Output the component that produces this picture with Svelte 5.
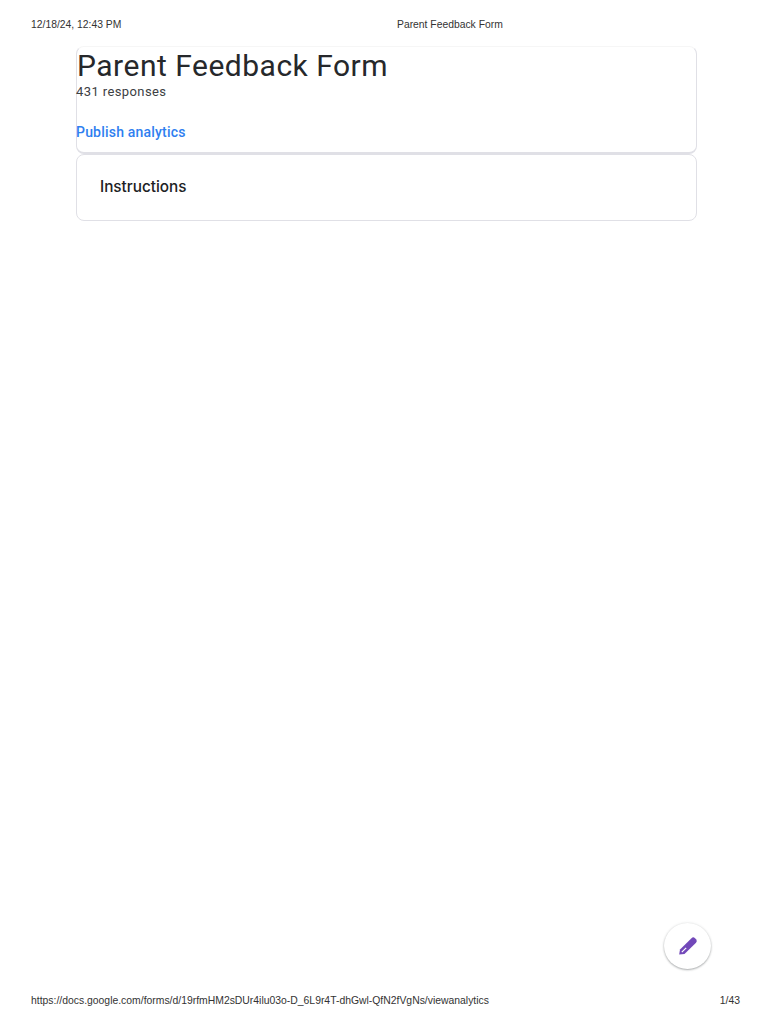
<script>
  const title = 'Parent Feedback Form';
</script>

<div class="page">
  <header class="print-head">
    <span class="date">12/18/24, 12:43 PM</span>
    <span class="doc-title">{title}</span>
  </header>

  <main class="content">
    <section class="card summary">
      <h1>{title}</h1>
      <p class="count">431 responses</p>
      <a class="publish" href="#publish">Publish analytics</a>
    </section>
    <section class="card instructions">
      <h2>Instructions</h2>
    </section>
  </main>

  <button class="fab" aria-label="Edit">
    <svg viewBox="0 0 24 24" width="24" height="24" aria-hidden="true">
      <path d="M3.2 20.5L4 15.5L15.5 4.2a2.5 2.5 0 0 1 3.5 0l1 1a2.5 2.5 0 0 1 0 3.5L8.5 20z" fill="#7248b9"/>
      <path d="M5.8 18.2L10.2 13.8" stroke="#fff" stroke-width="1.2" fill="none"/>
    </svg>
  </button>

  <footer class="print-foot">
    <span>https://docs.google.com/forms/d/19rfmHM2sDUr4ilu03o-D_6L9r4T-dhGwl-QfN2fVgNs/viewanalytics</span>
    <span>1/43</span>
  </footer>
</div>

<style>
  :global(body) {
    margin: 0;
    background: #fff;
  }
  .page {
    position: relative;
    width: 770px;
    height: 1024px;
    overflow: hidden;
    display: flex;
    flex-direction: column;
    font-family: "Liberation Sans", Arial, sans-serif;
    color: #202124;
  }
  .print-head {
    display: grid;
    grid-template-columns: 366px auto;
    padding: 18px 31px 0;
    height: 29px;
    box-sizing: border-box;
    font-size: 10.35px;
    line-height: 14px;
    color: #333;
  }
  .content {
    flex: 1;
    margin: 17px 73px 0 76px;
    display: flex;
    flex-direction: column;
  }
  .card {
    box-sizing: border-box;
    background: #fff;
    border: 1px solid #e0e0e6;
    border-radius: 8px;
  }
  .summary {
    height: 108px;
    border-top-color: #f6f6f6;
    border-bottom-width: 2px;
    font-family: Roboto, sans-serif;
  }
  h1 {
    margin: 0;
    padding-top: 1px;
    font-family: Roboto, sans-serif;
    font-weight: 400;
    font-size: 30px;
    line-height: 36px;
    letter-spacing: 0.5px;
    color: #26282b;
  }
  .count {
    margin: -1px 0 0 -1px;
    font-size: 13px;
    line-height: 18px;
    letter-spacing: 0.4px;
    color: #3c4043;
  }
  .publish {
    display: block;
    margin: 21px 0 0 -1px;
    font-size: 14px;
    font-weight: 500;
    line-height: 20px;
    letter-spacing: 0.2px;
    color: #2f7ff0;
    text-decoration: none;
  }
  .instructions {
    height: 67px;
    display: flex;
    align-items: center;
    padding: 0 0 2px 23px;
  }
  h2 {
    margin: 0;
    font-family: Inter, Roboto, sans-serif;
    font-weight: 500;
    font-size: 15.3px;
    color: #202124;
  }
  .fab {
    position: absolute;
    left: 664px;
    top: 923px;
    width: 47px;
    height: 46px;
    padding: 0;
    border: 0;
    border-radius: 50%;
    background: #fff;
    display: flex;
    align-items: center;
    justify-content: center;
    box-shadow: 0 1px 2px rgba(60, 64, 67, 0.4), 0 0 3px rgba(60, 64, 67, 0.12);
  }
  .print-foot {
    display: flex;
    justify-content: space-between;
    padding: 0 30px 16px 31px;
    font-size: 10.4px;
    line-height: 14px;
    color: #333;
  }
</style>
